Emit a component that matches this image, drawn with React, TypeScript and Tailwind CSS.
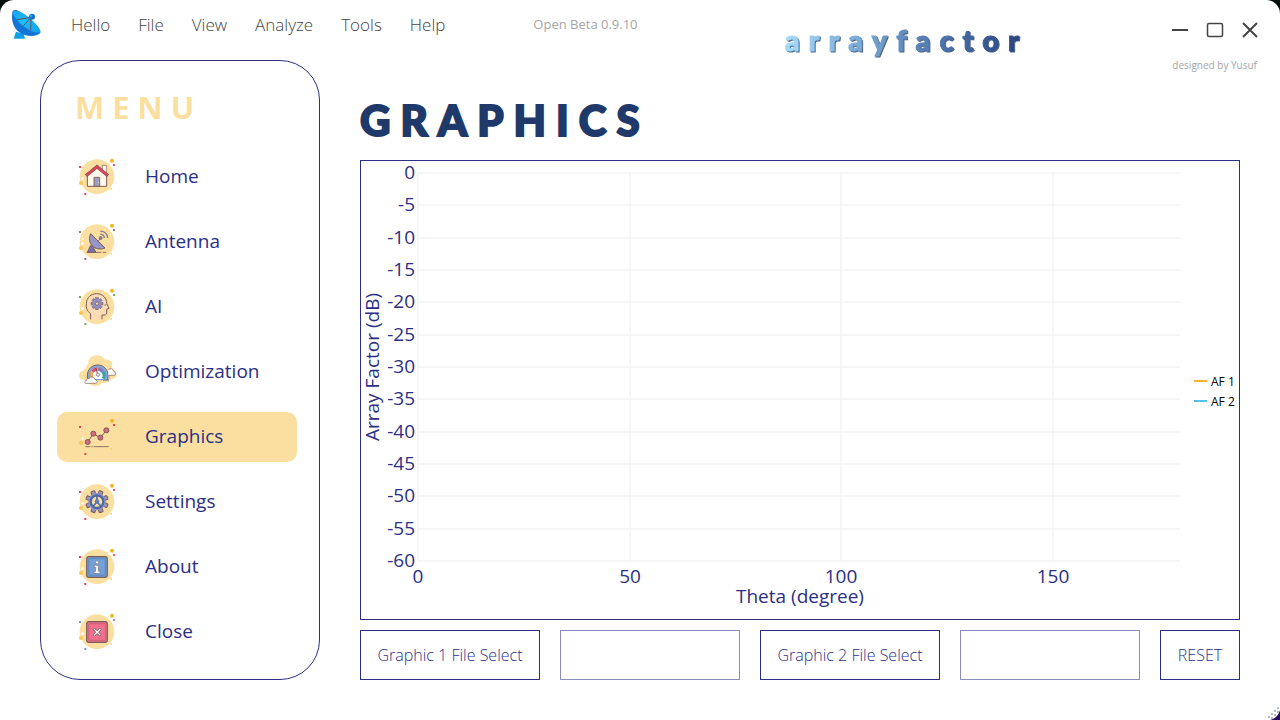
import type { ReactNode } from "react";

const OUTLINE = "#7a5a56";

function Backdrop({ a, b }: { a: string; b: string }) {
  return (
    <>
      <circle cx="81" cy="80" r="52" fill="#fbdfa1" />
      <Sparks a={a} b={b} />
    </>
  );
}

function Sparks({ a, b }: { a: string; b: string }) {
  return (
    <>
      <circle cx="126" cy="32" r="6" fill="#f4b81c" />
      <rect x="129" y="42" width="6" height="6" rx="1" fill={a} />
      <rect x="27" y="48" width="6" height="6" rx="1" fill={b} />
      <circle cx="33" cy="99" r="6" fill="#fac654" />
      <rect x="43" y="129" width="6" height="6" rx="1" fill={b} />
      <rect x="121" y="114" width="5" height="5" rx="1" fill="#fad06e" />
      <path d="M38 81v9M33 86h9" stroke="#fff" strokeWidth="3" />
    </>
  );
}

function IconFrame({ children }: { children: ReactNode }) {
  return (
    <svg viewBox="24 21 120 120" className="size-10 shrink-0" aria-hidden="true">
      {children}
    </svg>
  );
}

function HomeIcon() {
  return (
    <IconFrame>
      <Backdrop a="#f2526b" b="#ee3e54" />
      <path d="M97 46h12v22H97z" fill="#fff" stroke={OUTLINE} strokeWidth="2" />
      <path d="M52 74L81 51l29 23v35H52z" fill="#fdf8ea" stroke={OUTLINE} strokeWidth="3" />
      <path d="M72 82h17v27H72z" fill="#9c9dbb" stroke={OUTLINE} strokeWidth="2.5" />
      <circle cx="85" cy="97" r="1.5" fill="#fff" />
      <path d="M48 77l33-27 33 27" fill="none" stroke={OUTLINE} strokeWidth="10" />
      <path d="M49 76l32-26 32 26" fill="none" stroke="#e2405c" strokeWidth="7" />
    </IconFrame>
  );
}

function AntennaIcon() {
  return (
    <IconFrame>
      <Backdrop a="#a0706c" b="#a0706c" />
      <circle cx="39" cy="72" r="3" fill="#fff" />
      <path d="M61 92l-9 20h26l-10-18z" fill="#7475a8" stroke={OUTLINE} strokeWidth="2.5" />
      <path d="M62 56c-6 14-4 28 5 37 9 9 24 12 38 6z" fill="#9596c5" stroke={OUTLINE} strokeWidth="3" />
      <path d="M84 79l8-10" stroke={OUTLINE} strokeWidth="2.5" />
      <circle cx="92" cy="69" r="4.5" fill="#7f80b2" stroke={OUTLINE} strokeWidth="2" />
      <path d="M91 58c7 0 12 5 12 11M91 49c12 0 21 8 22 20" fill="none" stroke="#8d8196" strokeWidth="4.5" />
      <path d="M50 112h44M98 112h11" stroke={OUTLINE} strokeWidth="2.5" />
    </IconFrame>
  );
}

function MindIcon() {
  const teeth = [0, 45, 90, 135, 180, 225, 270, 315];
  return (
    <IconFrame>
      <Backdrop a="#76a84a" b="#76a84a" />
      <path
        d="M62 118V101C51 94 48 83 49 71c1-19 14-30 31-30 18 0 30 13 30 29l7 15-7 3v11c0 5-4 7-14 6v13"
        fill="#fbdcb4"
        stroke={OUTLINE}
        strokeWidth="3"
      />
      {teeth.map((t) => (
        <rect key={t} x="77" y="53" width="8" height="9" fill="#8586bd" stroke={OUTLINE} strokeWidth="1.5" transform={`rotate(${t} 81 71)`} />
      ))}
      <circle cx="81" cy="71" r="13" fill="#8f90c6" />
      <circle cx="81" cy="71" r="5" fill="#fbdcb4" stroke={OUTLINE} strokeWidth="2.5" />
      <path d="M103 75h6" stroke={OUTLINE} strokeWidth="2.5" />
    </IconFrame>
  );
}

function GaugeIcon() {
  return (
    <IconFrame>
      <path
        d="M43 105c-13-1-18-10-15-18 3-7 8-10 13-9 0-4 3-7 8-8-2-6 1-10 6-13-1-15 9-26 24-26 13 0 23 5 26 13 11-3 22 5 22 16 0 4-1 7-3 10 11 2 17 11 15 21-2 9-10 14-21 12-3 9-12 13-22 11-9 12-32 13-41-2z"
        fill="#fbdfa1"
      />
      <path d="M53 105c-5-26 8-45 30-45s36 20 30 45H99c4-18-2-30-16-30s-21 12-16 30z" fill="#8bb0e6" stroke={OUTLINE} strokeWidth="3" />
      <path d="M59 104c-5-23 6-38 24-38s29 15 24 38z" fill="#fff" stroke="#6a93cf" strokeWidth="3" />
      <path d="M66 100a20 20 0 0 1 0-19" fill="none" stroke="#eea34c" strokeWidth="9" />
      <path d="M67 80a20 20 0 0 1 14-8" fill="none" stroke="#df5266" strokeWidth="10" />
      <path d="M82 72a20 20 0 0 1 16 8" fill="none" stroke="#8a78b4" strokeWidth="10" />
      <path d="M98 79a20 20 0 0 1 2 22" fill="none" stroke="#3da5a5" strokeWidth="10" />
      <path d="M77 69l7 21" stroke="#8b3d49" strokeWidth="3" />
      <circle cx="84" cy="89" r="5" fill="#e9edf3" stroke={OUTLINE} strokeWidth="2" />
      <path d="M114 110c3-7 3-13 2-19h15c7 0 8-10 0-12-1-9-12-10-16-4" fill="#fff" stroke={OUTLINE} strokeWidth="2" />
      <path d="M48 115h28c8 0 7-10 0-10-2-10-15-12-19-4-6-1-9 2-8 6-6 0-7 8-1 8z" fill="#fff" stroke={OUTLINE} strokeWidth="2" />
    </IconFrame>
  );
}

function TrendIcon() {
  const nodes = [
    [53, 96],
    [70, 71],
    [91, 83],
    [109, 61],
  ];
  return (
    <IconFrame>
      <Sparks a="#ee3e54" b="#ee3e54" />
      <path d="M53 96L70 71l21 12 18-22" fill="none" stroke={OUTLINE} strokeWidth="3" />
      {nodes.map(([x, y]) => (
        <circle key={x} cx={x} cy={y} r="7.5" fill="#d96881" stroke={OUTLINE} strokeWidth="3" />
      ))}
      <path d="M46 110h15M64 110h4M71 110h45" stroke={OUTLINE} strokeWidth="2.5" />
    </IconFrame>
  );
}

function GearIcon() {
  const teeth = [22, 67, 112, 157, 202, 247, 292, 337];
  return (
    <IconFrame>
      <Backdrop a="#f2526b" b="#ee3e54" />
      {teeth.map((t) => (
        <rect key={t} x="75" y="46" width="12" height="16" rx="3" fill="#9596c8" stroke={OUTLINE} strokeWidth="3" transform={`rotate(${t} 81 80)`} />
      ))}
      <circle cx="81" cy="80" r="26" fill="#9596c8" />
      <circle cx="81" cy="80" r="19" fill="#fbdfa1" stroke="#4d6aa6" strokeWidth="7" />
      <path d="M81 80L70 93M81 80l11 13M81 80V63" stroke="#4d6aa6" strokeWidth="5" />
      <circle cx="81" cy="80" r="7" fill="#5f7db8" />
    </IconFrame>
  );
}

function InfoIcon() {
  return (
    <IconFrame>
      <Backdrop a="#f2526b" b="#ee3e54" />
      <rect x="50" y="50" width="62" height="62" rx="7" fill="#72a0d9" stroke={OUTLINE} strokeWidth="3.5" />
      <rect x="56" y="56" width="50" height="50" rx="4" fill="none" stroke="#5479ab" strokeWidth="2" />
      <path d="M73 76h12v18h5v6H72v-6h5V82h-4z" fill="#fff" stroke={OUTLINE} strokeWidth="1.5" />
      <circle cx="81" cy="67" r="4.5" fill="#fff" stroke={OUTLINE} strokeWidth="1.5" />
    </IconFrame>
  );
}

function CloseBoxIcon() {
  return (
    <IconFrame>
      <Backdrop a="#6f96d0" b="#6f96d0" />
      <rect x="50" y="50" width="62" height="62" rx="7" fill="#f1708b" stroke={OUTLINE} strokeWidth="3.5" />
      <rect x="56" y="56" width="50" height="50" rx="4" fill="none" stroke="#b95a70" strokeWidth="2" />
      <path d="M71 71l21 21M92 71L71 92" stroke={OUTLINE} strokeWidth="7.5" />
      <path d="M72 72l19 19M91 72L72 91" stroke="#fff" strokeWidth="4" />
    </IconFrame>
  );
}

function DishLogo() {
  return (
    <svg viewBox="33 30 96 96" className="size-8 shrink-0" role="img" aria-label="Array Factor">
      <defs>
        <linearGradient id="dish" x1="0" y1="0" x2="1" y2="1">
          <stop offset="0" stopColor="#1aa0f0" />
          <stop offset="0.45" stopColor="#16c0fc" />
          <stop offset="1" stopColor="#189cee" />
        </linearGradient>
      </defs>
      <path d="M48 98l-7 21h34l-4-15z" fill="#0aa0ec" />
      <path d="M38 36c-6 26 2 50 19 63 18 14 50 17 64 3 2-6-8-20-27-38L60 38c-9-6-18-6-22-2z" fill="#1474d6" />
      <path d="M40 36c10-4 30 4 50 22 21 18 34 36 31 41-6 6-34-2-55-21C46 60 34 42 40 36z" fill="url(#dish)" />
      <path d="M51 62l42-7M71 80l22-25M92 94l1-39" fill="none" stroke="#674d5e" strokeWidth="3" />
      <circle cx="96" cy="53" r="9" fill="#126fd2" />
      <circle cx="93" cy="51" r="4" fill="#24a8f5" />
    </svg>
  );
}

const menus = ["Hello", "File", "View", "Analyze", "Tools", "Help"];

const pages = [
  { name: "Home", icon: <HomeIcon /> },
  { name: "Antenna", icon: <AntennaIcon /> },
  { name: "AI", icon: <MindIcon /> },
  { name: "Optimization", icon: <GaugeIcon /> },
  { name: "Graphics", icon: <TrendIcon /> },
  { name: "Settings", icon: <GearIcon /> },
  { name: "About", icon: <InfoIcon /> },
  { name: "Close", icon: <CloseBoxIcon /> },
];

function TitleBar() {
  return (
    <header className="flex h-[60px] items-start pl-[11px] pr-[19px]">
      <div className="flex h-[50px] items-center">
        <DishLogo />
        <nav className="ml-7 flex gap-7 text-[17px] font-light text-[#444444]">
          {menus.map((m) => (
            <button key={m} type="button">
              {m}
            </button>
          ))}
        </nav>
        <span className="ml-[88px] whitespace-nowrap text-[13px] text-[#a6a6a6]">Open Beta 0.9.10</span>
      </div>
      <div className="ml-auto mr-[141px] mt-[22px] drop-shadow-[1px_1px_0px_#44618c]">
        <span className="block bg-linear-to-r from-[#a5dcfb] to-[#263f7c] bg-clip-text font-['Lato','Liberation_Sans',sans-serif] text-[29px] font-black leading-9 tracking-[9px] text-transparent [-webkit-text-stroke:1px_transparent]">
          arrayfactor
        </span>
      </div>
      <div className="flex h-[60px] items-center gap-[13px] text-[#444444]">
        <button type="button" aria-label="Minimize">
          <svg viewBox="0 0 22 22" className="size-[22px]" fill="none" stroke="currentColor" strokeWidth="2">
            <path d="M3 11h16" />
          </svg>
        </button>
        <button type="button" aria-label="Maximize">
          <svg viewBox="0 0 22 22" className="size-[22px]" fill="none" stroke="currentColor" strokeWidth="1.5">
            <rect x="3.5" y="4.5" width="15" height="13" rx="1.5" />
          </svg>
        </button>
        <button type="button" aria-label="Close window">
          <svg viewBox="0 0 22 22" className="size-[22px]" fill="none" stroke="currentColor" strokeWidth="2">
            <path d="M4 4l14 14M18 4L4 18" />
          </svg>
        </button>
      </div>
    </header>
  );
}

function SideMenu() {
  return (
    <aside className="w-[280px] shrink-0 rounded-[40px] border border-[#2c2f84] px-4 pb-[22px] pt-6">
      <h2 className="pl-[18px] text-[31px] font-bold leading-[44px] tracking-[8px] text-[#fbdfa1]">MENU</h2>
      <nav className="mt-[23px] flex flex-col gap-[15px]">
        {pages.map((p) => (
          <button
            key={p.name}
            type="button"
            aria-current={p.name === "Graphics" ? "page" : undefined}
            className="flex h-[50px] w-[240px] items-center gap-[27px] rounded-[10px] pl-[21px] text-[19px] text-[#2c2f84] aria-[current=page]:bg-[#fbdfa1]"
          >
            {p.icon}
            <span className="pb-0.5">{p.name}</span>
          </button>
        ))}
      </nav>
    </aside>
  );
}

const PLOT = { left: 57, right: 819, top: 12, bottom: 400 };
const dbTicks = Array.from({ length: 13 }, (_, i) => -5 * i);
const thetaTicks = [0, 50, 100, 150];
const yAt = (db: number) => Math.round(PLOT.top + (-db / 60) * (PLOT.bottom - PLOT.top));
const xAt = (deg: number) => Math.round(PLOT.left + (deg / 180) * (PLOT.right - PLOT.left));

function Chart() {
  return (
    <svg viewBox="0 0 878 458" className="block w-full" fill="#2c2f84" fontSize="19" role="img" aria-label="Array factor against theta">
      <g stroke="#f3f3f3" strokeWidth="1.5">
        {dbTicks.map((d) => (
          <line key={d} x1={PLOT.left} x2={PLOT.right} y1={yAt(d)} y2={yAt(d)} />
        ))}
        {thetaTicks.map((t) => (
          <line key={t} x1={xAt(t)} x2={xAt(t)} y1={PLOT.top} y2={PLOT.bottom} />
        ))}
      </g>
      {dbTicks.map((d) => (
        <text key={d} x="54" y={yAt(d) + 6} textAnchor="end">
          {d}
        </text>
      ))}
      {thetaTicks.map((t) => (
        <text key={t} x={xAt(t)} y="422" textAnchor="middle">
          {t}
        </text>
      ))}
      <text x="439" y="442" textAnchor="middle">
        Theta (degree)
      </text>
      <text x="18" y="206" textAnchor="middle" transform="rotate(-90 18 206)">
        Array Factor (dB)
      </text>
      <g fontSize="12" fill="#000000">
        <path d="M833 220h13" stroke="#fbb230" strokeWidth="2" />
        <text x="850" y="225">AF 1</text>
        <path d="M833 240h13" stroke="#56c1ea" strokeWidth="2" />
        <text x="850" y="245">AF 2</text>
      </g>
    </svg>
  );
}

const actionClass = "h-[50px] whitespace-nowrap border border-[#2c2f84] text-[16px] font-light text-[#2c2f84]";
const fieldClass = "h-[50px] w-full min-w-0 border border-[#8b8dbd] px-3 text-[16px] text-[#2c2f84] outline-none";

export default function App() {
  return (
    <div className="min-h-screen bg-[#02100c] font-['Open_Sans','Noto_Sans',sans-serif]">
      <div className="relative min-h-screen rounded-t-[14px] bg-white pb-10">
        <TitleBar />
        <div className="flex gap-10 px-10">
          <SideMenu />
          <main className="flex min-w-0 flex-1 flex-col">
            <p className="-mr-[17px] text-right text-[10px] leading-[10px] text-[#a6a6a6]">designed by Yusuf</p>
            <h1 className="mt-[22px] whitespace-nowrap font-['Lato','Liberation_Sans',sans-serif] text-[42px] font-black leading-[56px] tracking-[10px] text-[#1f3a6a] [-webkit-text-stroke:2px_#1f3a6a]">
              GRAPHICS
            </h1>
            <section className="mt-3 border border-[#2c2f84]">
              <Chart />
            </section>
            <div className="mt-[10px] grid grid-cols-[9fr_9fr_9fr_9fr_4fr] gap-5">
              <button type="button" className={actionClass}>
                Graphic 1 File Select
              </button>
              <input type="text" aria-label="Graphic 1 file" className={fieldClass} />
              <button type="button" className={actionClass}>
                Graphic 2 File Select
              </button>
              <input type="text" aria-label="Graphic 2 file" className={fieldClass} />
              <button type="button" className={actionClass}>
                RESET
              </button>
            </div>
          </main>
        </div>
        <svg viewBox="0 0 14 14" className="absolute bottom-0 right-0 size-[14px]" aria-hidden="true">
          <path d="M14 4v10H4c5-1 9-5 10-10z" fill="#2a0a5e" />
          <path d="M12 1v2M9 4v2M12 5v2M6 7v2M9 8v2M3 10v2M6 11v2" stroke="#b4bcc6" strokeWidth="2" />
        </svg>
      </div>
    </div>
  );
}
